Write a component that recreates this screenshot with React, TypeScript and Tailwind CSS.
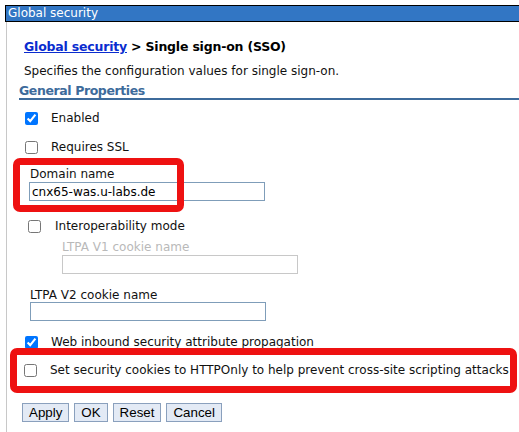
// Single sign-on (SSO) settings panel
const font = "font-['DejaVu_Sans',sans-serif]";

function Check({ checked }: { checked?: boolean }) {
  return (
    <input
      type="checkbox"
      defaultChecked={checked}
      className="m-0 h-[13px] w-[13px] shrink-0"
    />
  );
}

function Field({ value, disabled }: { value?: string; disabled?: boolean }) {
  return (
    <input
      type="text"
      defaultValue={value}
      disabled={disabled}
      className={
        "block h-[19px] w-[236px] border bg-white px-[2px] text-[12px] text-black outline-none " +
        font +
        (disabled ? " border-[#c8c8c8]" : " border-[#7f9db9]")
      }
    />
  );
}

function Btn({ label }: { label: string }) {
  return (
    <button className="h-[19px] border border-[#8aa0bd] bg-[#e3eaf5] px-[6px] font-['Liberation_Sans',Arial,sans-serif] text-[13.33px] leading-[17px] text-black">
      {label}
    </button>
  );
}

export default function App() {
  return (
    <div className={"relative h-[432px] w-[519px] overflow-hidden bg-white text-[12px] text-[#111] " + font}>
      {/* title bar */}
      <div className="ml-[5px] mt-[5px] h-[17px] border border-r-0 border-black bg-[#3276c4] pl-[2px] text-[12px] leading-[15px] text-white">
        Global security
      </div>

      <div className="ml-[6px] flex h-[410px] flex-col border-l border-[#c8c8c8]">
        {/* breadcrumb */}
        <div className="ml-[17px] mt-[15px] h-[20px] text-[12.5px] font-bold leading-[20px] tracking-[-0.2px] text-black">
          <a className="text-[#0a2ccf] underline">Global security</a> &gt; Single sign-on (SSO)
        </div>
        <div className="ml-[17px] mt-[6px] h-[16px] leading-[16px]">
          Specifies the configuration values for single sign-on.
        </div>
        <div className="ml-[12px] mt-[3px] h-[18px] border-b-2 border-[#3d6b9b] text-[12.5px] font-bold leading-[17px] tracking-[-0.4px] text-[#3d6b9b]">
          General Properties
        </div>

        <div className="ml-[18px] mt-[8px] flex h-[20px] items-center">
          <Check checked />
          <span className="ml-[13px]">Enabled</span>
        </div>
        <div className="ml-[18px] mt-[9px] flex h-[20px] items-center">
          <Check />
          <span className="ml-[13px]">Requires SSL</span>
        </div>

        <div className="ml-[23px] mt-[9px] h-[16px] leading-[16px]">Domain name</div>
        <div className="ml-[22px]">
          <Field value="cnx65-was.u-labs.de" />
        </div>

        <div className="ml-[21px] mt-[15px] flex h-[20px] items-center">
          <Check />
          <span className="ml-[14px]">Interoperability mode</span>
        </div>
        <div className="ml-[55px] mt-[3px] h-[16px] leading-[16px] text-[#b9b9b9]">LTPA V1 cookie name</div>
        <div className="ml-[55px]">
          <Field disabled />
        </div>

        <div className="ml-[23px] mt-[14px] h-[14px] leading-[14px]">LTPA V2 cookie name</div>
        <div className="ml-[23px]">
          <Field />
        </div>

        <div className="ml-[18px] mt-[11px] flex h-[20px] items-center">
          <Check checked />
          <span className="ml-[13px]">Web inbound security attribute propagation</span>
        </div>
        <div className="ml-[17px] mt-[8px] flex h-[20px] items-center">
          <Check />
          <span className="ml-[13px] whitespace-nowrap">
            Set security cookies to HTTPOnly to help prevent cross-site scripting attacks
          </span>
        </div>

        <div className="ml-[15px] mt-[23px] flex gap-[5px]">
          <Btn label="Apply" />
          <Btn label="OK" />
          <Btn label="Reset" />
          <Btn label="Cancel" />
        </div>
      </div>

      {/* red highlight annotations */}
      <div className="pointer-events-none absolute left-[13px] top-[158px] h-[54px] w-[171px] rounded-[7px] border-[7px] border-[#ee1111]" />
      <div className="pointer-events-none absolute left-[10px] top-[348px] h-[45px] w-[507px] rounded-[7px] border-[7px] border-[#ee1111]" />
    </div>
  );
}
